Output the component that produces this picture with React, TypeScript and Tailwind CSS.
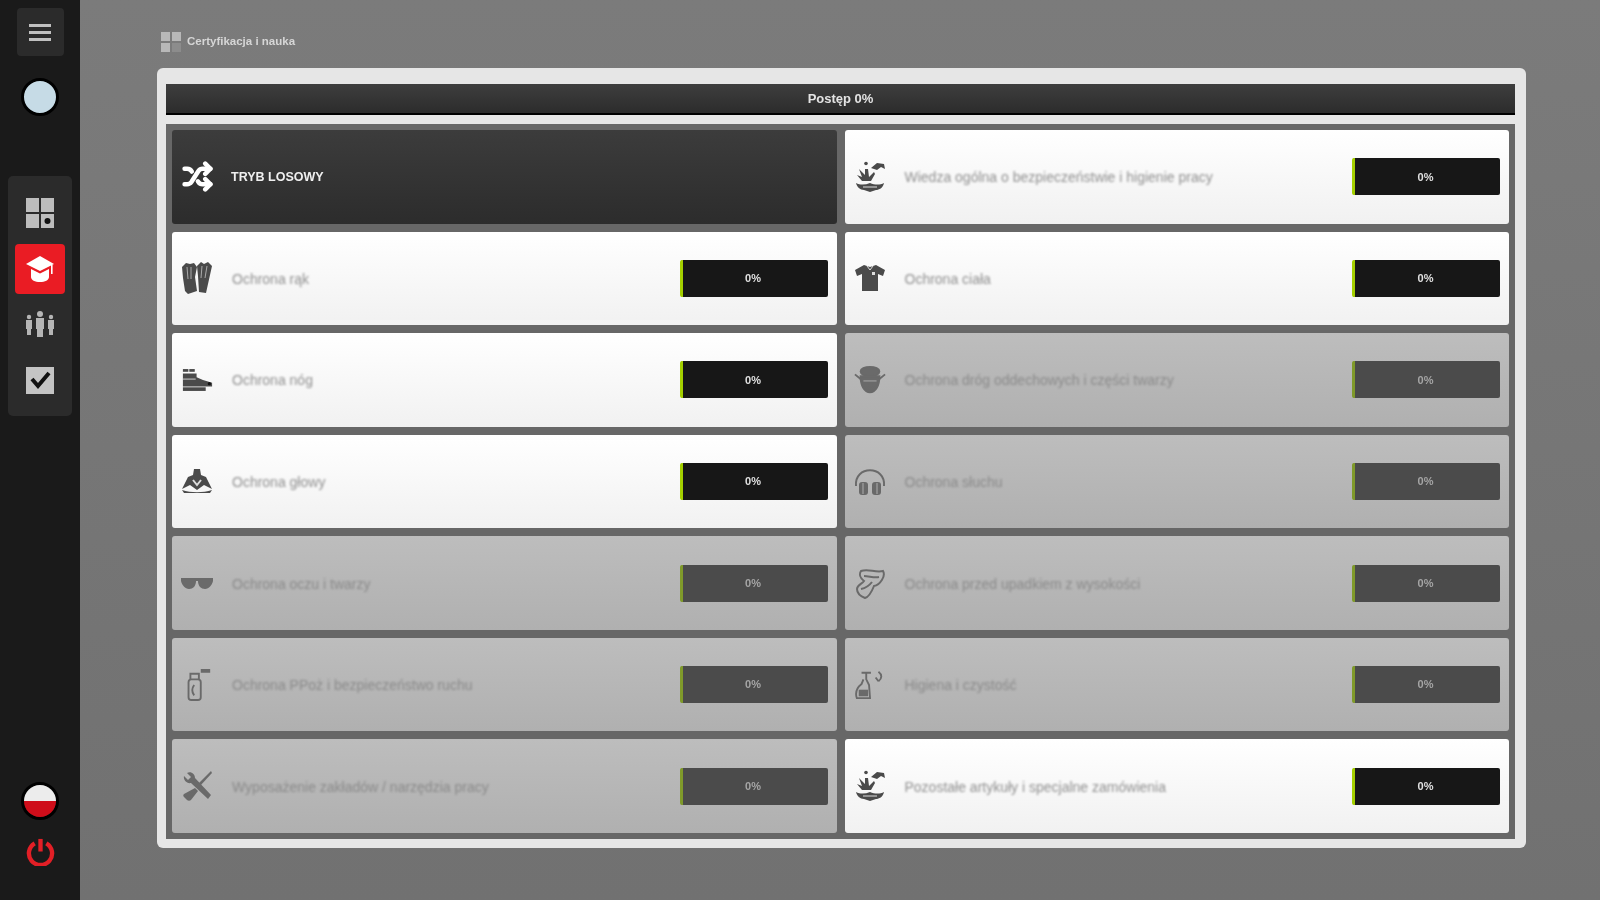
import { Shuffle } from "lucide-react";
import type { ReactNode } from "react";

const dark = "#4a4a4a";

// category icons, drawn small like the original app glyphs
function Gloves() {
  return (
    <svg viewBox="0 0 32 34" className="w-[32px] h-[34px]" fill={dark} preserveAspectRatio="none">
      <path d="M1 6l4-4 4 1 4-1 3 4-2 10 2 14-9 3-3-3-2-13z" />
      <path d="M16 5l4-4 3 2 4-2 4 4-2 9-4 18-7-1-1-16z" />
      <path d="M6 6l1 12M10 6v12M21 5l-1 12M26 5l-2 12" stroke="#aaa" strokeWidth="1" fill="none" />
    </svg>
  );
}

function Shirt() {
  return (
    <svg viewBox="0 0 32 32" className="w-8 h-8" fill={dark}>
      <path d="M10 3l6 2 6-2 9 5-2 6-5-2v17H8V12l-5 2-2-6z" />
      <rect x="18" y="10" width="3" height="3" fill="#ddd" />
      <path d="M13 4l3 4 3-4" stroke="#ddd" strokeWidth="1" fill="none" />
    </svg>
  );
}

function Splash() {
  return (
    <svg viewBox="0 0 32 32" className="w-8 h-8" fill={dark}>
      <circle cx="12" cy="2.500" r="1.800" />
      <path d="M17 7l6-5 7 1 1 5-4-2-4 3-3-1z" />
      <path d="M5 8l6 6 0-6 3 0 1 8 5-5 1 2-4 7H8l-5-6 5 2z" />
      <path d="M2 22c4 2 9 2 14 0 5 2 10 2 14 0-1 5-5 7-8 7l-6 2-6-2c-4 0-7-3-8-7z" />
      <path d="M9 26h14" stroke="#ddd" strokeWidth="1" />
    </svg>
  );
}

function Boot() {
  return (
    <svg viewBox="0 0 34 26" className="w-[31px] h-[24px]" fill={dark}>
      <rect x="1" y="1" width="6" height="3" />
      <rect x="8" y="1" width="6" height="3" />
      <path d="M1 6h15v4l7 3 10 3v4H1z" />
      <path d="M1 12h14" stroke="#ddd" strokeWidth="1" />
      <rect x="1" y="21" width="25" height="4" />
      <circle cx="30" cy="17" r="1.800" fill="#111" />
    </svg>
  );
}

function Helmet() {
  return (
    <svg viewBox="0 0 32 26" className="w-8 h-8" fill={dark}>
      <path d="M13 1h6l1 6 5 2 6 12-8-4-7 5-7-5-8 4L7 9l5-2z" />
      <path d="M12 12l4 5 4-5" stroke="#ddd" strokeWidth="2" fill="none" />
      <path d="M1 22c9 3 21 3 30 0l-2 3H3z" />
    </svg>
  );
}

function Mask() {
  return (
    <svg viewBox="0 0 34 32" className="w-8 h-8" fill="none" stroke={dark} strokeWidth="2">
      <ellipse cx="17" cy="7" rx="10" ry="5" fill={dark} />
      <path d="M7 12c0 10 4 17 10 17s10-7 10-17z" fill={dark} />
      <path d="M1 10l6 5M33 10l-6 5" />
      <path d="M10 17h14" stroke="#aaa" strokeWidth="1" />
    </svg>
  );
}

function Earmuffs() {
  return (
    <svg viewBox="0 0 32 32" className="w-8 h-8" fill="none" stroke={dark} strokeWidth="2">
      <path d="M2 21C0 0 32 0 30 21" />
      <rect x="5" y="17" width="9" height="13" rx="3" fill={dark} stroke="none" />
      <rect x="18" y="17" width="9" height="13" rx="3" fill={dark} stroke="none" />
      <path d="M9 18v11M23 18v11" stroke="#aaa" strokeWidth="1" />
    </svg>
  );
}

function Glasses() {
  return (
    <svg viewBox="0 0 32 14" className="w-8 h-8" fill={dark}>
      <path d="M0 2h14l1 3c0 5-3 8-7 8S1 9 0 5z" />
      <path d="M32 2H18l-1 3c0 5 3 8 7 8s7-4 8-8z" />
      <rect x="12" y="2" width="8" height="3" />
    </svg>
  );
}

function Harness() {
  return (
    <svg viewBox="0 0 32 32" className="w-8 h-8" fill="none" stroke={dark} strokeWidth="2">
      <path d="M7 4c7-3 14 2 22 0 3 5-3 14-9 15-2 5-5 11-9 12-5-2-8-5-8-9 0-4 5-5 7-8-4-3-5-7-3-10z" />
      <path d="M10 9c5 0 10 2 15 1M7 22c5-1 8-3 11-7" />
    </svg>
  );
}

function Extinguisher() {
  return (
    <svg viewBox="0 0 32 34" className="w-8 h-8" fill="none" stroke={dark} strokeWidth="2">
      <rect x="7" y="11" width="13" height="22" rx="3" />
      <path d="M9 11V5h9v6M13 17c-3 4-3 7 0 11" />
      <rect x="20" y="0" width="10" height="4" fill={dark} stroke="none" />
    </svg>
  );
}

function SprayBottle() {
  return (
    <svg viewBox="0 0 34 32" className="w-8 h-8" fill="none" stroke={dark} strokeWidth="2">
      <path d="M8 3h10M13 3v7l3 6 1 14H3c-2-6 0-11 5-15l2-5" />
      <path d="M26 2c4 3 4 7 0 10M23 8l3 4" />
      <rect x="5" y="21" width="10" height="7" fill={dark} stroke="none" />
    </svg>
  );
}

function Tools() {
  return (
    <svg viewBox="0 0 32 32" className="w-8 h-8" fill={dark}>
      <path d="M3 6l4 4 3-3-4-4c4-2 8 1 8 5l16 17-3 4L10 13C6 14 2 10 3 6z" />
      <path d="M30 1l1 2-12 13-2-2z" />
      <path d="M14 18l3 3-7 9c-1 1-3 1-4 0l-3-3c-1-1-1-2 0-3z" />
    </svg>
  );
}

type Row = { label: string; icon: ReactNode; off?: boolean };

const rows: Row[] = [
  { label: "Wiedza ogólna o bezpieczeństwie i higienie pracy", icon: <Splash /> },
  { label: "Ochrona rąk", icon: <Gloves /> },
  { label: "Ochrona ciała", icon: <Shirt /> },
  { label: "Ochrona nóg", icon: <Boot /> },
  { label: "Ochrona dróg oddechowych i części twarzy", icon: <Mask />, off: true },
  { label: "Ochrona głowy", icon: <Helmet /> },
  { label: "Ochrona słuchu", icon: <Earmuffs />, off: true },
  { label: "Ochrona oczu i twarzy", icon: <Glasses />, off: true },
  { label: "Ochrona przed upadkiem z wysokości", icon: <Harness />, off: true },
  { label: "Ochrona PPoż i bezpieczeństwo ruchu", icon: <Extinguisher />, off: true },
  { label: "Higiena i czystość", icon: <SprayBottle />, off: true },
  { label: "Wyposażenie zakładów / narzędzia pracy", icon: <Tools />, off: true },
  { label: "Pozostałe artykuły i specjalne zamówienia", icon: <Splash /> },
];

function Cell({ label, icon, off }: Row) {
  return (
    <div
      className={
        off
          ? "flex items-center rounded-[3px] pl-[9px] pr-[9px] bg-gradient-to-b from-[#bdbdbd] to-[#b0b0b0]"
          : "flex items-center rounded-[3px] pl-[9px] pr-[9px] bg-gradient-to-b from-white to-[#f1f1f1]"
      }
    >
      <div className={off ? "w-8 h-8 flex items-center justify-center opacity-70 blur-[0.5px]" : "w-8 h-8 flex items-center justify-center blur-[0.5px]"}>
        {icon}
      </div>
      <span className={off ? "ml-[19px] pt-[2px] flex-1 text-[14px] text-[#8a8a8a] blur-[0.8px]" : "ml-[19px] pt-[2px] flex-1 text-[14px] text-[#909090] blur-[0.8px]"}>
        {label}
      </span>
      <div
        className={
          off
            ? "w-[148px] h-[37px] flex items-center justify-center rounded-[2px] border-l-[3px] border-[#7f9a2a] bg-[#4b4b4b] text-[#a5a5a5] text-[11px] font-bold"
            : "w-[148px] h-[37px] flex items-center justify-center rounded-[2px] border-l-[3px] border-[#a4d000] bg-[#171717] text-[#e0e0e0] text-[11px] font-bold"
        }
      >
        <span className="blur-[0.5px] -ml-1">0%</span>
      </div>
    </div>
  );
}

export default function App() {
  return (
    <div className="flex w-[1600px] h-[900px] overflow-hidden bg-gradient-to-b from-[#7b7b7b] to-[#717171] font-['Liberation_Sans',sans-serif]">
      {/* sidebar */}
      <aside className="w-[80px] shrink-0 bg-[#1a1a1a] flex flex-col items-center pt-2 pb-[34px]">
        <button type="button" className="w-[47px] h-[48px] rounded-[4px] bg-[#2b2b2b] flex flex-col items-center justify-center gap-[4px]">
          <span className="w-[22px] h-[3px] bg-[#c0c0c0]" />
          <span className="w-[22px] h-[3px] bg-[#c0c0c0]" />
          <span className="w-[22px] h-[3px] bg-[#c0c0c0]" />
        </button>

        <div className="mt-[22px] w-[38px] h-[38px] rounded-full border-[3px] border-black bg-[#c6dbe6] blur-[0.4px]" />

        <nav className="mt-[60px] w-[64px] h-[240px] rounded-[5px] bg-[#2b2b2b] flex flex-col items-center pt-[6px]">
          <div className="h-[62px] flex items-center justify-center">
            <svg viewBox="0 0 30 32" className="w-[30px] h-[32px]">
              <rect x="1" y="1" width="13" height="14" fill="#bdbdbd" />
              <rect x="16" y="1" width="13" height="14" fill="#bdbdbd" />
              <rect x="1" y="17" width="13" height="14" fill="#bdbdbd" />
              <rect x="16" y="17" width="13" height="14" fill="#bdbdbd" />
              <circle cx="22.5" cy="24" r="3" fill="#111" />
            </svg>
          </div>
          <div className="w-[50px] h-[50px] rounded-[4px] bg-[#ea1c24] flex items-center justify-center">
            <svg viewBox="0 0 30 30" className="w-[30px] h-[30px]" fill="#fff">
              <path d="M15 2L1 10l14 7 14-7z" />
              <path d="M6 15v8c0 3 4 5 9 5s9-2 9-5v-8l-9 4.500z" />
              <rect x="26" y="11" width="1.600" height="9" />
            </svg>
          </div>
          <div className="h-[60px] flex items-center justify-center">
            <svg viewBox="0 0 30 26" className="w-[30px] h-[26px]" fill="#b5b5b5">
              <circle cx="15" cy="3" r="3" />
              <path d="M11 7h8v11h-1v8h-6v-8h-1z" />
              <circle cx="4" cy="6" r="2.200" />
              <path d="M1 9h6v9H6v6H2v-6H1z" />
              <circle cx="26" cy="6" r="2.200" />
              <path d="M23 9h6v9h-1v6h-4v-6h-1z" />
            </svg>
          </div>
          <div className="h-[52px] flex items-center justify-center">
            <svg viewBox="0 0 30 30" className="w-[30px] h-[30px]">
              <rect x="1" y="2" width="28" height="27" fill="#c4c4c4" />
              <path d="M7 14l6 7L24 8" fill="none" stroke="#111" strokeWidth="4" />
            </svg>
          </div>
        </nav>

        <div className="mt-auto w-[38px] h-[38px] rounded-full border-[3px] border-black overflow-hidden flex flex-col blur-[0.4px]">
          <div className="h-1/2 bg-[#ececec]" />
          <div className="h-1/2 bg-[#cf0d1a]" />
        </div>
        <svg viewBox="0 0 30 30" className="mt-[17px] w-[29px] h-[29px]" fill="none" stroke="#e21f26" strokeWidth="4.500">
          <path d="M9 6.500a12 12 0 1 0 12 0" />
          <path d="M15 2v13" />
        </svg>
      </aside>

      {/* content */}
      <main className="flex-1 flex flex-col pl-[77px] pr-[74px]">
        <div className="h-[68px] flex items-center pl-[4px] pt-[16px]">
          <svg viewBox="0 0 20 20" className="w-5 h-5 blur-[0.4px]">
            <rect x="0" y="0" width="9" height="9" fill="#b8b8b8" />
            <rect x="11" y="0" width="9" height="9" fill="#b8b8b8" />
            <rect x="0" y="11" width="9" height="9" fill="#b8b8b8" />
            <rect x="11" y="11" width="9" height="9" fill="#8c8c8c" />
          </svg>
          <span className="ml-[6px] text-[11.5px] font-bold text-[#d6d6d6] blur-[0.6px]">Certyfikacja i nauka</span>
        </div>

        <section className="h-[780px] rounded-[6px] bg-[#e6e6e6] pl-[9px] pr-[11px] pt-[16px] pb-[9px] flex flex-col">
          <div className="h-[31px] shrink-0 border-b-2 border-black bg-gradient-to-b from-[#3e3e3e] to-[#2c2c2c] flex items-center justify-center text-[13px] font-bold text-[#e4e4e4]">
            <span className="blur-[0.6px]">Postęp 0%</span>
          </div>
          <div className="mt-[9px] flex-1 bg-[#676767] px-[6px] pt-[6px] pb-[6px] grid grid-cols-2 grid-rows-7 gap-x-[8px] gap-y-[8px]">
            <div className="flex items-center rounded-[3px] pl-[10px] bg-gradient-to-b from-[#3c3c3c] to-[#2c2c2c]">
              <Shuffle size={31} strokeWidth={3.5} className="text-white blur-[0.4px]" />
              <span className="ml-[18px] pt-[2px] text-[12.5px] font-bold text-[#efefef] blur-[0.6px]">TRYB LOSOWY</span>
            </div>
            {rows.map((r) => (
              <Cell key={r.label} {...r} />
            ))}
          </div>
        </section>
      </main>
    </div>
  );
}
